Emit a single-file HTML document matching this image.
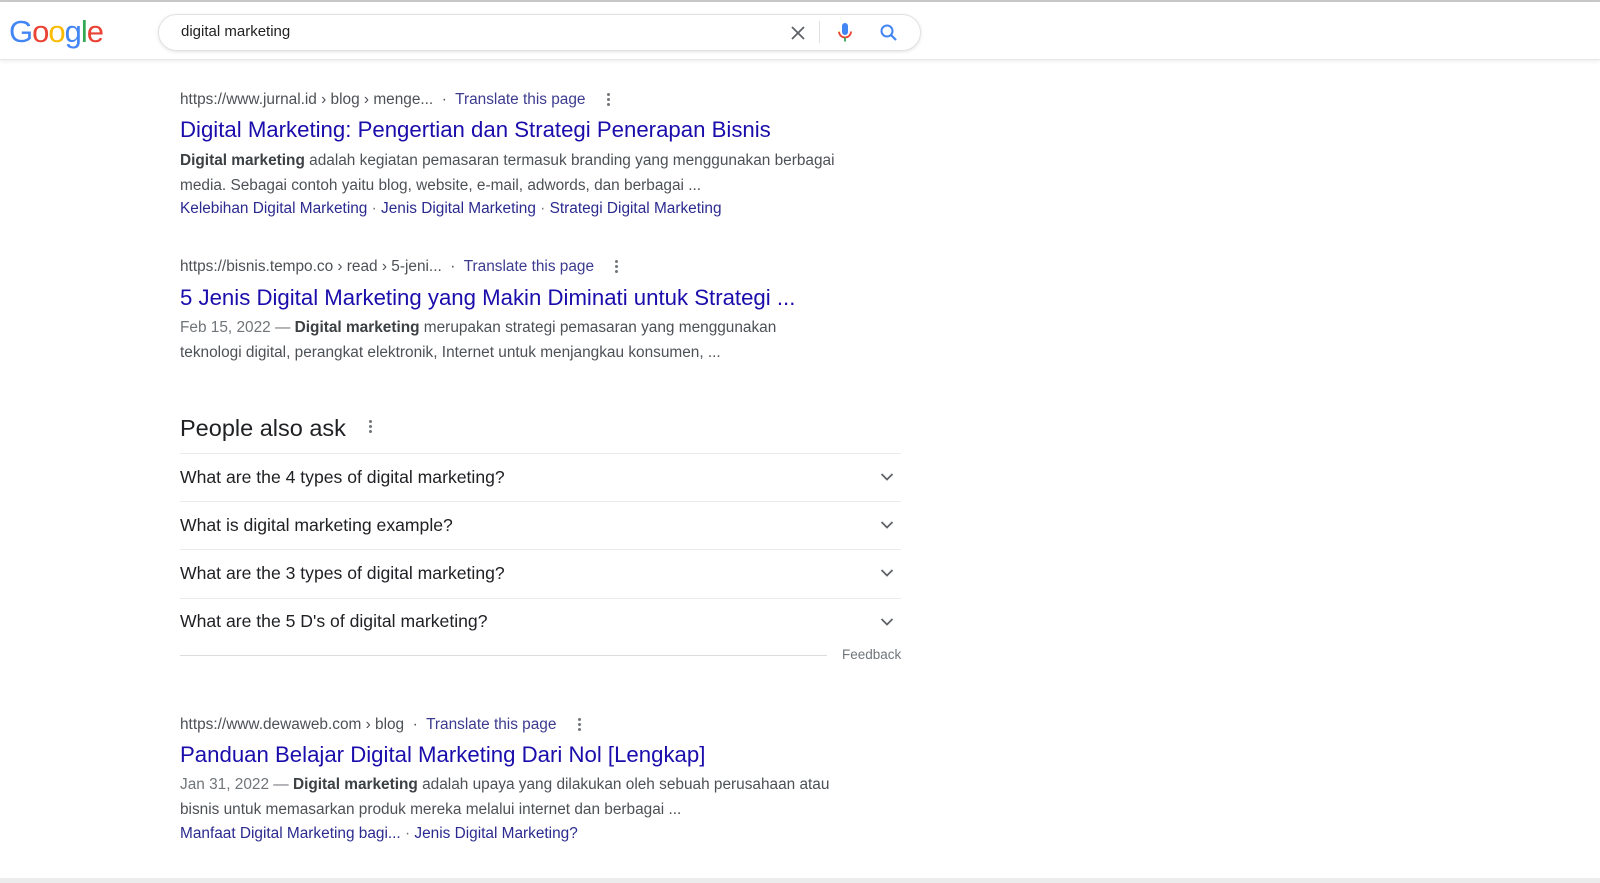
<!DOCTYPE html>
<html><head><meta charset="utf-8"><style>
*{margin:0;padding:0;box-sizing:border-box}
body{width:1600px;height:883px;background:#fff;font-family:"Liberation Sans",Arial,sans-serif;position:relative;overflow:hidden;color:#202124}
.abs{position:absolute;white-space:nowrap}
.top{position:absolute;left:0;top:0;width:1600px;height:2px;background:#c8c8c8}
.hdr{position:absolute;left:0;top:2px;width:1600px;height:58px;border-bottom:1px solid #e6e6e6;box-shadow:0 2px 4px rgba(0,0,0,.06)}
.logo{left:9px;top:14px;font-size:31px;letter-spacing:-1px}
.box{position:absolute;left:158px;top:14px;width:763px;height:37px;border:1px solid #dfe1e5;border-radius:19px;box-shadow:0 1px 3px rgba(32,33,36,.12)}
.url{font-size:15.4px;color:#4d5156}
.tr{color:#3c3b8f}
.title{font-size:22.2px;color:#1a0dab}
.sn{font-size:15.4px;color:#4d5156;line-height:24.5px}
.sn b{color:#3c4043}
.lk{font-size:15.4px;color:#2b2a8f}
.q{font-size:17.6px;color:#202124}
.sep{position:absolute;left:180px;width:721px;height:1px;background:#ebebeb}
.dots{position:absolute;width:3px}
.dots i{display:block;width:3px;height:3px;border-radius:50%;background:#70757a;margin-bottom:2px}
.chev{position:absolute;left:880px}
.bot{position:absolute;left:0;top:878px;width:1600px;height:5px;background:#ececec}
</style></head><body>
<div class="top"></div>
<div class="hdr"></div>
<div class="abs logo"><span style="color:#4285f4">G</span><span style="color:#ea4335">o</span><span style="color:#fbbc05">o</span><span style="color:#4285f4">g</span><span style="color:#34a853">l</span><span style="color:#ea4335">e</span></div>
<div class="box"></div>
<div class="abs" style="left:181px;top:23px;font-size:15px;color:#222">digital marketing</div>
<svg class="abs" style="left:789px;top:24px" width="18" height="18" viewBox="0 0 18 18"><path d="M3 3L15 15M15 3L3 15" stroke="#5f6368" stroke-width="1.8"/></svg>
<div class="abs" style="left:819px;top:21px;width:1px;height:22px;background:#dfe1e5"></div>
<svg class="abs" style="left:836px;top:21px" width="18" height="24" viewBox="0 0 18 24"><rect x="6" y="2" width="6" height="12" rx="3" fill="#4285f4"/><path d="M3 10.5a6 6 0 0 0 12 0" fill="none" stroke="#ea4335" stroke-width="1.8"/><path d="M9 16.5v4" stroke="#34a853" stroke-width="1.8"/><path d="M3 10.5v0.5" stroke="#fbbc05" stroke-width="1.8"/></svg>
<svg class="abs" style="left:879px;top:23px" width="20" height="20" viewBox="0 0 20 20"><circle cx="8" cy="8" r="5.5" fill="none" stroke="#4285f4" stroke-width="2"/><path d="M12 12l5 5" stroke="#4285f4" stroke-width="2.2"/></svg>

<!-- Result 1 -->
<div class="abs url" style="left:180px;top:91px">https://www.jurnal.id › blog › menge... &nbsp;·&nbsp; <span class="tr">Translate this page</span></div>
<div class="dots" style="left:607px;top:93px"><i></i><i></i><i></i></div>
<div class="abs title" style="left:180px;top:117px">Digital Marketing: Pengertian dan Strategi Penerapan Bisnis</div>
<div class="abs sn" style="left:180px;top:149px"><b>Digital marketing</b> adalah kegiatan pemasaran termasuk branding yang menggunakan berbagai<br>media. Sebagai contoh yaitu blog, website, e-mail, adwords, dan berbagai ...</div>
<div class="abs lk" style="left:180px;top:200px">Kelebihan Digital Marketing <span style="color:#70757a">·</span> Jenis Digital Marketing <span style="color:#70757a">·</span> Strategi Digital Marketing</div>

<!-- Result 2 -->
<div class="abs url" style="left:180px;top:258px">https://bisnis.tempo.co › read › 5-jeni... &nbsp;·&nbsp; <span class="tr">Translate this page</span></div>
<div class="dots" style="left:615px;top:260px"><i></i><i></i><i></i></div>
<div class="abs title" style="left:180px;top:285px">5 Jenis Digital Marketing yang Makin Diminati untuk Strategi ...</div>
<div class="abs sn" style="left:180px;top:316px"><span style="color:#70757a">Feb 15, 2022 —</span> <b>Digital marketing</b> merupakan strategi pemasaran yang menggunakan<br>teknologi digital, perangkat elektronik, Internet untuk menjangkau konsumen, ...</div>

<!-- PAA -->
<div class="abs" style="left:180px;top:415px;font-size:23.5px;color:#202124">People also ask</div>
<div class="dots" style="left:369px;top:420px"><i></i><i></i><i></i></div>
<div class="sep" style="top:453px"></div>
<div class="abs q" style="left:180px;top:467px">What are the 4 types of digital marketing?</div>
<div class="sep" style="top:501px"></div>
<div class="abs q" style="left:180px;top:515px">What is digital marketing example?</div>
<div class="sep" style="top:549px"></div>
<div class="abs q" style="left:180px;top:563px">What are the 3 types of digital marketing?</div>
<div class="sep" style="top:598px"></div>
<div class="abs q" style="left:180px;top:611px">What are the 5 D's of digital marketing?</div>
<svg class="chev" style="top:472px" width="14" height="10" viewBox="0 0 14 10"><path d="M1.5 2l5.5 5.5L12.5 2" fill="none" stroke="#5f6368" stroke-width="1.8"/></svg>
<svg class="chev" style="top:520px" width="14" height="10" viewBox="0 0 14 10"><path d="M1.5 2l5.5 5.5L12.5 2" fill="none" stroke="#5f6368" stroke-width="1.8"/></svg>
<svg class="chev" style="top:568px" width="14" height="10" viewBox="0 0 14 10"><path d="M1.5 2l5.5 5.5L12.5 2" fill="none" stroke="#5f6368" stroke-width="1.8"/></svg>
<svg class="chev" style="top:617px" width="14" height="10" viewBox="0 0 14 10"><path d="M1.5 2l5.5 5.5L12.5 2" fill="none" stroke="#5f6368" stroke-width="1.8"/></svg>
<div style="position:absolute;left:180px;top:655px;width:647px;height:1px;background:#dadce0"></div>
<div class="abs" style="left:842px;top:647px;font-size:13.5px;color:#70757a">Feedback</div>

<!-- Result 3 -->
<div class="abs url" style="left:180px;top:716px">https://www.dewaweb.com › blog &nbsp;·&nbsp; <span class="tr">Translate this page</span></div>
<div class="dots" style="left:578px;top:718px"><i></i><i></i><i></i></div>
<div class="abs title" style="left:180px;top:742px">Panduan Belajar Digital Marketing Dari Nol [Lengkap]</div>
<div class="abs sn" style="left:180px;top:773px"><span style="color:#70757a">Jan 31, 2022 —</span> <b>Digital marketing</b> adalah upaya yang dilakukan oleh sebuah perusahaan atau<br>bisnis untuk memasarkan produk mereka melalui internet dan berbagai ...</div>
<div class="abs lk" style="left:180px;top:825px">Manfaat Digital Marketing bagi... <span style="color:#70757a">·</span> Jenis Digital Marketing?</div>
<div class="bot"></div>
</body></html>
